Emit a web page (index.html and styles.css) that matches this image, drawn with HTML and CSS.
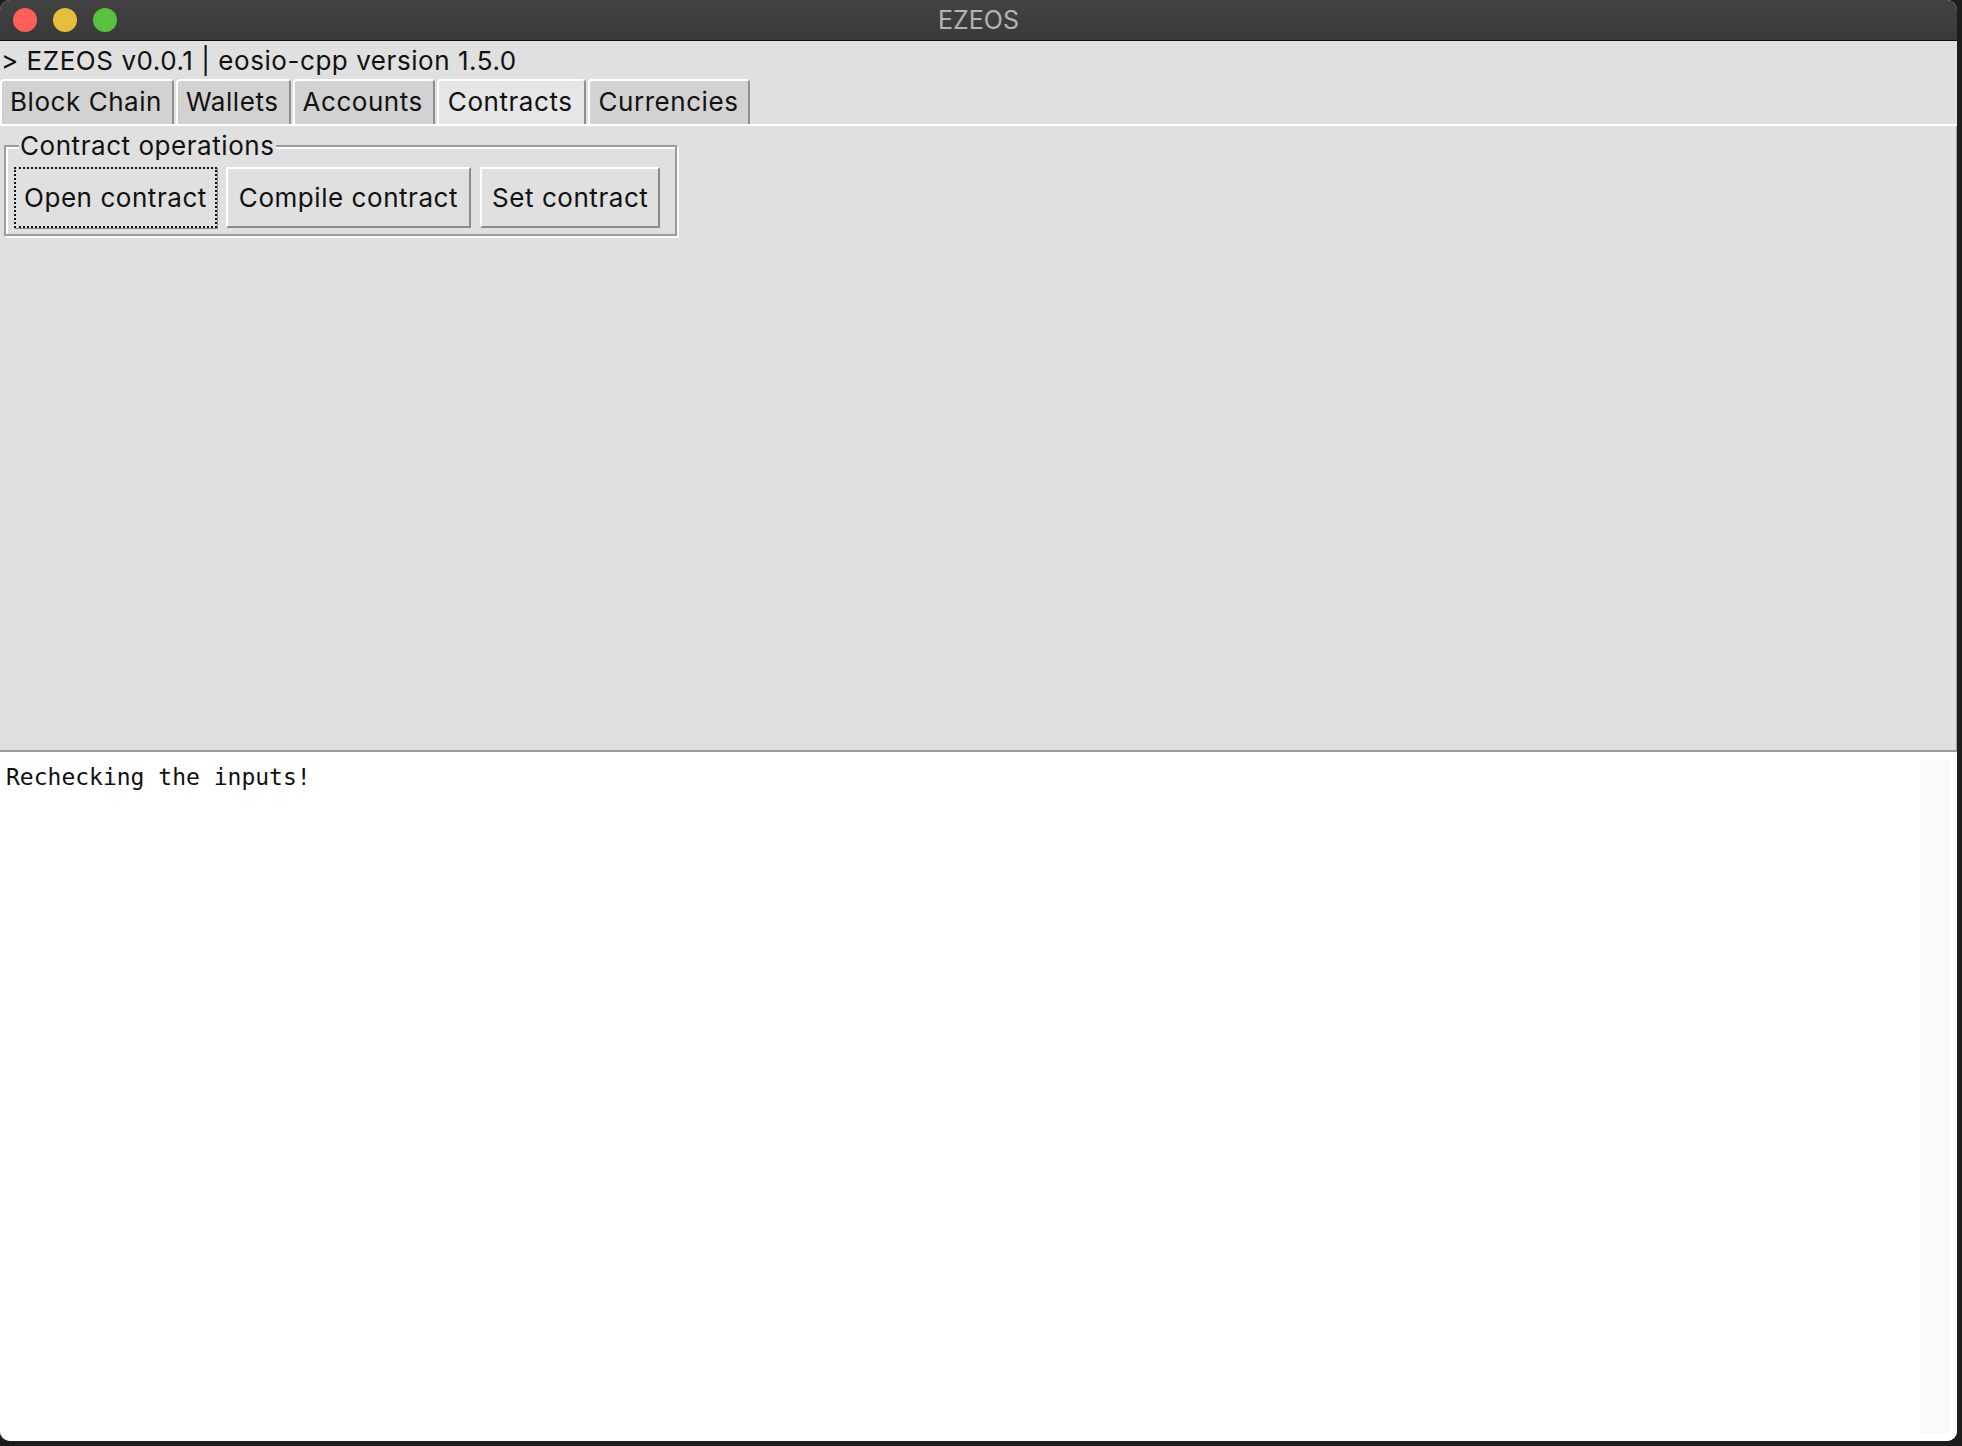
FILE: index.html
```html
<!DOCTYPE html>
<html lang="en">
<head>
  <meta charset="UTF-8" />
  <title>EZEOS</title>
  <link rel="stylesheet" href="styles.css">
</head>
<body>
  <div class="window">
    <div class="titlebar">
      <div class="lights">
        <span class="light red"></span>
        <span class="light yellow"></span>
        <span class="light green"></span>
      </div>
      <div class="title">EZEOS</div>
      <div></div>
    </div>

    <div class="upper">
      <div class="status">&gt; EZEOS v0.0.1 | eosio-cpp version 1.5.0</div>
      <div class="tabs">
        <div class="tab">Block Chain</div>
        <div class="tab">Wallets</div>
        <div class="tab">Accounts</div>
        <div class="tab active">Contracts</div>
        <div class="tab">Currencies</div>
      </div>
      <div class="tab-page">
        <fieldset class="group">
          <legend>Contract operations</legend>
          <div class="group-buttons">
            <button class="btn focused">Open contract</button>
            <button class="btn">Compile contract</button>
            <button class="btn">Set contract</button>
          </div>
        </fieldset>
      </div>
    </div>

    <!-- output console -->
    <div class="console">
      <pre class="console-text">Rechecking the inputs!</pre>
      <div class="scroll-track"></div>
    </div>
  </div>
</body>
</html>
```

FILE: styles.css
```css
* {
  box-sizing: border-box;
}

body {
  margin: 0;
  background-color: #1d1d1d;
  font-family: Inter, "Noto Sans", sans-serif;
  letter-spacing: 0.55px;
  color: #111;
}

.window {
  width: 1957px;
  height: 1441px;
  border-radius: 10px;
  overflow: hidden;
  display: flex;
  flex-direction: column;
  background-color: #e0e0e0;
}

/* Title bar */
.titlebar {
  flex: none;
  height: 41px;
  display: grid;
  grid-template-columns: 1fr auto 1fr;
  align-items: center;
  background: linear-gradient(#424242, #393939);
  border-bottom: 1px solid #0f0f0f;
}

.lights {
  display: flex;
  gap: 16px;
  padding-left: 13px;
}

.light {
  width: 24px;
  height: 24px;
  border-radius: 50%;
}

.red { background-color: #fe5f57; }
.yellow { background-color: #e5bf3c; }
.green { background-color: #58c13d; }

.title {
  color: #b3b3b3;
  font-size: 25px;
  letter-spacing: 0;
}

/* Upper part: status line, tabs, tab page */
.upper {
  flex: none;
  display: flex;
  flex-direction: column;
  height: 711px;
  border-bottom: 2px solid #9b9b9b;
}

.status {
  height: 38px;
  padding: 2px 0 0 1px;
  font-size: 26px;
  line-height: 36px;
  white-space: nowrap;
}

.tabs {
  display: flex;
  gap: 2px;
  height: 47px;
  border-bottom: 2px solid #fff;
}

.tab {
  height: 45px;
  padding: 0 10px 0 8px;
  font-size: 26px;
  line-height: 41px;
  background-color: #d2d2d2;
  border-top: 2px solid #fff;
  border-left: 2px solid #fff;
  border-right: 2px solid #8f8f8f;
  border-radius: 4px 4px 0 0;
  white-space: nowrap;
}

.tab.active {
  padding: 0 12px 0 9px;
  background-color: #e6e6e6;
}

.tab-page {
  flex: 1;
  padding: 5px 0 0 4px;
  border-right: 1px solid #a3a3a3;
}

/* Group box */
.group {
  margin: 0;
  width: 673px;
  padding: 6px 10px 6px 8px;
  border: 2px solid #9c9c9c;
  box-shadow: inset 2px 2px 0 #fff, 2px 2px 0 #fff;
}

.group legend {
  margin-left: 5px;
  padding: 0 1px;
  font-size: 26px;
  line-height: 30px;
  background-color: #e0e0e0;
}

.group-buttons {
  display: flex;
  gap: 9px;
}

.btn {
  height: 61px;
  padding: 0 11px;
  font-family: inherit;
  font-size: 26px;
  letter-spacing: 0.55px;
  color: #111;
  background-color: #e0e0e0;
  border: 2px solid;
  border-color: #fff #8a8a8a #8a8a8a #fff;
  border-radius: 0;
}

.btn + .btn + .btn {
  padding: 0 10px;
}

.btn.focused {
  padding: 0 8px;
  border: 2px dotted #111;
  box-shadow: 1px 1px 0 #8a8a8a;
}

/* Console */
.console {
  flex: 1;
  display: flex;
  background-color: #fff;
}

.console-text {
  flex: 1;
  margin: 0;
  padding: 12px 0 0 6px;
  font-family: "DejaVu Sans Mono", monospace;
  font-size: 23px;
  letter-spacing: 0;
}

.scroll-track {
  width: 30px;
  margin: 8px 7px 8px 0;
  background-color: #f9f9f9;
}
```
